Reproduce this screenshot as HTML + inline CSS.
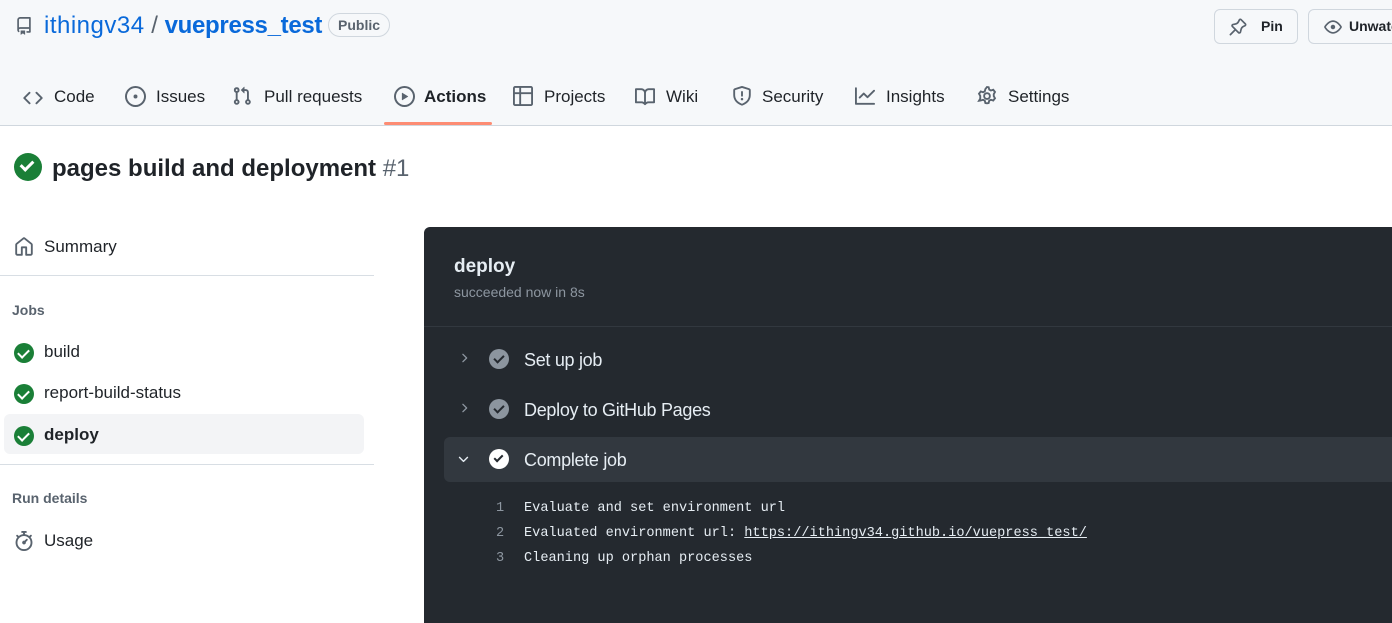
<!DOCTYPE html>
<html><head><meta charset="utf-8"><style>
*{margin:0;padding:0;box-sizing:border-box}
body{width:1392px;height:623px;overflow:hidden;background:#fff;font-family:"Liberation Sans",sans-serif;color:#1f2328;position:relative}
.abs{position:absolute}
.hdr{left:0;top:0;width:1392px;height:126px;background:#f6f8fa;border-bottom:1px solid #d0d7de}
.nav{top:87px;font-size:17px;color:#1f2328;white-space:nowrap}
.nav svg{position:absolute;margin-top:-1px}
.btn{top:9px;height:35px;border:1px solid #d0d7de;border-radius:6px;background:#f6f8fa;font-size:14px;font-weight:bold;}
.side{font-size:17px;color:#1f2328}
.chk{position:absolute;width:20px;height:20px;border-radius:50%;background:#1a7f37}
.chk:after{content:"";position:absolute;left:6px;top:4px;width:5px;height:9px;border:solid #fff;border-width:0 2px 2px 0;transform:rotate(45deg)}
.dark{left:424px;top:227px;width:968px;height:396px;background:#24292f;border-radius:6px 0 0 0}
.g{position:absolute;width:20px;height:20px;border-radius:50%;background:#8c959f}
.g:after{content:"";position:absolute;left:7px;top:4px;width:4px;height:8px;border:solid #24292f;border-width:0 2px 2px 0;transform:rotate(45deg)}
.step{font-size:18px;color:#e6edf3;letter-spacing:-0.3px}
.mono{font-family:"Liberation Mono",monospace;font-size:13.6px;color:#e6edf3}
</style></head><body>
<div class="abs hdr"></div>
<svg class="abs" style="left:15px;top:16px" width="18" height="20" viewBox="0 0 16 16"><path fill="#59636e" d="M2 2.5A2.5 2.5 0 0 1 4.5 0h8.75a.75.75 0 0 1 .75.75v12.5a.75.75 0 0 1-.75.75h-2.5a.75.75 0 0 1 0-1.5h1.75v-2h-8a1 1 0 0 0-.714 1.7.75.75 0 1 1-1.072 1.05A2.495 2.495 0 0 1 2 11.5Zm10.5-1h-8a1 1 0 0 0-1 1v6.708A2.486 2.486 0 0 1 4.5 9h8ZM5 12.25a.25.25 0 0 1 .25-.25h3.5a.25.25 0 0 1 .25.25v3.25a.25.25 0 0 1-.4.2l-1.45-1.087a.249.249 0 0 0-.3 0L5.4 15.7a.25.25 0 0 1-.4-.2Z"/></svg>
<div class="abs" style="left:44px;top:12px;font-size:24px;color:#0969da;white-space:nowrap"><span style="letter-spacing:0.5px">ithingv34</span> <span style="color:#59636e">/</span> <span style="font-weight:600;letter-spacing:-0.3px">vuepress_test</span></div>
<div class="abs" style="left:328px;top:13px;height:24px;padding:0 9px;border:1px solid #d0d7de;border-radius:12px;font-size:14px;line-height:22px;color:#59636e;font-weight:bold">Public</div>
<div class="abs btn" style="left:1214px;width:84px"><svg class="abs" style="left:14px;top:8px" width="18" height="18" viewBox="0 0 16 16"><path fill="#59636e" d="m11.294.984 3.722 3.722a1.75 1.75 0 0 1-.504 2.826l-1.327.613a3.089 3.089 0 0 0-1.707 2.084l-.584 2.454c-.317 1.332-1.972 1.8-2.940.832L5.750 11.311 1.780 15.280a.749.749 0 1 1-1.060-1.060l3.969-3.970-2.204-2.204c-.968-.968-.5-2.623.832-2.940l2.454-.584a3.080 3.080 0 0 0 2.084-1.707l.613-1.327a1.750 1.750 0 0 1 2.826-.504ZM6.283 9.723l2.732 2.731a.25.25 0 0 0 .42-.119l.584-2.454a4.586 4.586 0 0 1 2.537-3.098l1.328-.613a.25.25 0 0 0 .072-.404l-3.722-3.722a.25.25 0 0 0-.404.072l-.613 1.328a4.584 4.584 0 0 1-3.098 2.537l-2.454.584a.25.25 0 0 0-.119.42l2.731 2.732Z"/></svg><span class="abs" style="left:46px;top:8px">Pin</span></div>
<div class="abs btn" style="left:1308px;width:100px"><svg class="abs" style="left:15px;top:8px" width="18" height="18" viewBox="0 0 16 16"><path fill="#59636e" d="M8 2c1.981 0 3.671.992 4.933 2.078 1.27 1.091 2.187 2.345 2.637 3.023a1.62 1.62 0 0 1 0 1.798c-.45.678-1.367 1.932-2.637 3.023C11.67 13.008 9.981 14 8 14c-1.981 0-3.671-.992-4.933-2.078C1.797 10.83.88 9.576.43 8.898a1.62 1.62 0 0 1 0-1.798c.45-.677 1.367-1.931 2.637-3.022C4.33 2.992 6.019 2 8 2ZM1.679 7.932a.12.12 0 0 0 0 .136c.411.622 1.241 1.75 2.366 2.717C5.176 11.758 6.527 12.5 8 12.5c1.473 0 2.825-.742 3.955-1.715 1.124-.967 1.954-2.096 2.366-2.717a.12.12 0 0 0 0-.136c-.412-.621-1.242-1.750-2.366-2.717C10.824 4.242 9.473 3.5 8 3.5c-1.473 0-2.825.742-3.955 1.715-1.124.967-1.954 2.096-2.366 2.717ZM8 10a2 2 0 1 1-.001-3.999A2 2 0 0 1 8 10Z"/></svg><span class="abs" style="left:40px;top:8px">Unwatch</span></div>

<div class="abs nav" style="left:0;width:1392px">
<svg style="left:23px;top:2px" width="20" height="20" viewBox="0 0 16 16"><path fill="#59636e" d="m11.28 3.22 4.25 4.25a.75.75 0 0 1 0 1.06l-4.25 4.25a.749.749 0 0 1-1.06-1.06L13.94 8l-3.72-3.72a.749.749 0 0 1 1.06-1.06Zm-6.56 0a.751.751 0 0 1 1.06 1.06L2.06 8l3.72 3.72a.749.749 0 0 1-1.06 1.06L.47 8.530a.75.75 0 0 1 0-1.06Z"/></svg><span class="abs" style="left:54px">Code</span>
<svg style="left:125px;top:0" width="21" height="21" viewBox="0 0 16 16"><path fill="#59636e" d="M8 9.5a1.5 1.5 0 1 0 0-3 1.5 1.5 0 0 0 0 3Z"/><path fill="#59636e" d="M8 0a8 8 0 1 1 0 16A8 8 0 0 1 8 0ZM1.5 8a6.5 6.5 0 1 0 13 0 6.5 6.5 0 0 0-13 0Z"/></svg><span class="abs" style="left:156px">Issues</span>
<svg style="left:232px;top:0" width="20" height="20" viewBox="0 0 16 16"><path fill="#59636e" d="M1.5 3.25a2.25 2.25 0 1 1 3 2.122v5.256a2.251 2.251 0 1 1-1.5 0V5.372A2.25 2.25 0 0 1 1.5 3.25Zm5.677-.177L9.573.677A.25.25 0 0 1 10 .854V2.5h1A2.5 2.5 0 0 1 13.5 5v5.628a2.251 2.251 0 1 1-1.5 0V5a1 1 0 0 0-1-1h-1v1.646a.25.25 0 0 1-.427.177L7.177 3.427a.25.25 0 0 1 0-.354ZM3.75 2.5a.75.75 0 1 0 0 1.5.75.75 0 0 0 0-1.5Zm0 9.5a.75.75 0 1 0 0 1.5.75.75 0 0 0 0-1.5Zm8.25.75a.75.75 0 1 0 1.5 0 .75.75 0 0 0-1.5 0Z"/></svg><span class="abs" style="left:264px">Pull requests</span>
<svg style="left:394px;top:0" width="21" height="21" viewBox="0 0 16 16"><path fill="#59636e" d="M8 0a8 8 0 1 1 0 16A8 8 0 0 1 8 0ZM1.5 8a6.5 6.5 0 1 0 13 0 6.5 6.5 0 0 0-13 0Zm4.879-2.773 4.264 2.559a.25.25 0 0 1 0 .428l-4.264 2.559A.25.25 0 0 1 6 10.559V5.442a.25.25 0 0 1 .379-.215Z"/></svg><span class="abs" style="left:424px;font-weight:bold">Actions</span>
<svg style="left:513px;top:0" width="20" height="20" viewBox="0 0 16 16"><path fill="#59636e" d="M0 1.75C0 .784.784 0 1.75 0h12.5C15.216 0 16 .784 16 1.75v12.5A1.75 1.75 0 0 1 14.25 16H1.75A1.75 1.75 0 0 1 0 14.25ZM6.5 6.5v8h7.75a.25.25 0 0 0 .25-.25V6.5Zm8-1.5V1.75a.25.25 0 0 0-.25-.25H6.5V5Zm-13 1.5v7.75c0 .138.112.25.25.25H5v-8ZM5 5V1.5H1.75a.25.25 0 0 0-.25.25V5Z"/></svg><span class="abs" style="left:544px">Projects</span>
<svg style="left:635px;top:1px" width="20" height="20" viewBox="0 0 16 16"><path fill="#59636e" d="M0 1.75A.75.75 0 0 1 .75 1h4.253c1.227 0 2.317.59 3 1.501A3.743 3.743 0 0 1 11.006 1h4.245a.75.75 0 0 1 .75.75v10.5a.75.75 0 0 1-.75.75h-4.507a2.25 2.25 0 0 0-1.591.659l-.622.621a.75.75 0 0 1-1.06 0l-.622-.621A2.25 2.25 0 0 0 5.258 13H.75a.75.75 0 0 1-.75-.75Zm7.251 10.324.004-5.073-.002-2.253A2.25 2.25 0 0 0 5.003 2.5H1.5v9h3.757a3.75 3.75 0 0 1 1.994.574ZM8.755 4.75l-.004 7.322a3.752 3.752 0 0 1 1.992-.572H14.5v-9h-3.495a2.25 2.25 0 0 0-2.25 2.25Z"/></svg><span class="abs" style="left:666px">Wiki</span>
<svg style="left:732px;top:0" width="20" height="20" viewBox="0 0 16 16"><path fill="#59636e" d="M7.467.133a1.748 1.748 0 0 1 1.066 0l5.25 1.68A1.75 1.75 0 0 1 15 3.48V7c0 1.566-.32 3.182-1.303 4.682-.983 1.498-2.585 2.813-5.032 3.855a1.697 1.697 0 0 1-1.33 0c-2.447-1.042-4.049-2.357-5.032-3.855C1.32 10.182 1 8.566 1 7V3.48a1.755 1.755 0 0 1 1.217-1.667Zm.61 1.429a.25.25 0 0 0-.153 0l-5.25 1.68a.25.25 0 0 0-.174.238V7c0 1.358.275 2.666 1.057 3.86.784 1.194 2.121 2.34 4.366 3.297a.196.196 0 0 0 .154 0c2.245-.956 3.582-2.104 4.366-3.298C13.225 9.666 13.5 8.36 13.5 7V3.48a.251.251 0 0 0-.174-.237l-5.25-1.68ZM8.75 4.75v3a.75.75 0 0 1-1.5 0v-3a.75.75 0 0 1 1.5 0ZM9 10.5a1 1 0 1 1-2 0 1 1 0 0 1 2 0Z"/></svg><span class="abs" style="left:762px">Security</span>
<svg style="left:855px;top:0" width="20" height="20" viewBox="0 0 16 16"><path fill="#59636e" d="M1.5 1.75V13.5h13.75a.75.75 0 0 1 0 1.5H.75a.75.75 0 0 1-.75-.75V1.75a.75.75 0 0 1 1.5 0Zm14.28 2.53-5.25 5.25a.75.75 0 0 1-1.06 0L7 7.06 4.28 9.78a.751.751 0 0 1-1.042-.018.751.751 0 0 1-.018-1.042l3.25-3.25a.75.75 0 0 1 1.06 0L10 7.94l4.72-4.72a.751.751 0 0 1 1.042.018.751.751 0 0 1 .018 1.042Z"/></svg><span class="abs" style="left:886px">Insights</span>
<svg style="left:977px;top:0" width="20" height="20" viewBox="0 0 16 16"><path fill="none" stroke="#59636e" stroke-width="1.5" d="M8 .8l1.3.2.5 1.9 1.3.7 1.9-.6 1.4 1.8-1 1.7v1.6l1 1.7-1.4 1.8-1.9-.6-1.3.7-.5 1.9-1.3.2-1.3-.2-.5-1.9-1.3-.7-1.9.6L1.6 11.8l1-1.7V7.9l-1-1.7L3 4.4l1.9.6 1.3-.7.5-1.9Z"/><circle cx="8" cy="8" r="2.3" fill="none" stroke="#59636e" stroke-width="1.5"/></svg><span class="abs" style="left:1008px">Settings</span>
</div>
<div class="abs" style="left:384px;top:122px;width:108px;height:3px;background:#fd8c73;border-radius:2px"></div>

<div class="abs" style="left:14px;top:153px;width:28px;height:28px;border-radius:50%;background:#1a7f37"></div>
<div class="abs" style="left:23px;top:158px;width:8px;height:13px;border:solid #fff;border-width:0 3px 3px 0;transform:rotate(45deg)"></div>
<div class="abs" style="left:52px;top:155px;font-size:24px;font-weight:600;white-space:nowrap">pages build and deployment <span style="color:#59636e;font-weight:normal">#1</span></div>

<svg class="abs" style="left:14px;top:237px" width="20" height="20" viewBox="0 0 16 16"><path fill="#59636e" d="M6.906.664a1.749 1.749 0 0 1 2.187 0l5.25 4.2c.415.332.657.835.657 1.367v7.019A1.75 1.75 0 0 1 13.25 15h-3.5a.75.75 0 0 1-.75-.75V9H7v5.25a.75.75 0 0 1-.75.75h-3.5A1.75 1.75 0 0 1 1 13.25V6.23c0-.531.242-1.034.657-1.366l5.25-4.2Zm1.25 1.171a.25.25 0 0 0-.312 0l-5.25 4.2a.25.25 0 0 0-.094.196v7.019c0 .138.112.25.25.25H5.5V8.25a.75.75 0 0 1 .75-.75h3.5a.75.75 0 0 1 .75.75v5.25h2.75a.25.25 0 0 0 .25-.25V6.23a.25.25 0 0 0-.094-.195Z"/></svg>
<div class="abs side" style="left:44px;top:237px">Summary</div>
<div class="abs" style="left:0;top:275px;width:374px;height:1px;background:#d8dee4"></div>
<div class="abs" style="left:12px;top:302px;font-size:14px;color:#59636e;font-weight:bold">Jobs</div>
<div class="chk" style="left:14px;top:343px"></div><div class="abs side" style="left:44px;top:342px">build</div>
<div class="chk" style="left:14px;top:384px"></div><div class="abs side" style="left:44px;top:383px">report-build-status</div>
<div class="abs" style="left:4px;top:414px;width:360px;height:40px;background:#f3f4f6;border-radius:6px"></div>
<div class="chk" style="left:14px;top:426px"></div><div class="abs side" style="left:44px;top:425px;font-weight:bold">deploy</div>
<div class="abs" style="left:0;top:464px;width:374px;height:1px;background:#d8dee4"></div>
<div class="abs" style="left:12px;top:490px;font-size:14px;color:#59636e;font-weight:bold">Run details</div>
<svg class="abs" style="left:14px;top:531px" width="20" height="20" viewBox="0 0 16 16"><path fill="#59636e" d="M5.75.75A.75.75 0 0 1 6.5 0h3a.75.75 0 0 1 0 1.5h-.75v1l-.001.041a6.724 6.724 0 0 1 3.464 1.435l.007-.006.75-.75a.749.749 0 0 1 1.275.326.749.749 0 0 1-.215.734l-.75.75-.006.007a6.75 6.75 0 1 1-10.548 0L2.72 5.03l-.75-.75a.751.751 0 0 1 .018-1.042.751.751 0 0 1 1.042-.018l.75.75.007.006A6.72 6.72 0 0 1 7.25 2.541V1.5H6.5a.75.75 0 0 1-.75-.75ZM8 14.5a5.25 5.25 0 1 0-.001-10.501A5.25 5.25 0 0 0 8 14.5Zm.389-6.7 1.33-1.33a.75.75 0 1 1 1.061 1.06L9.45 8.861A1.503 1.503 0 0 1 8 10.75a1.499 1.499 0 1 1 .389-2.95Z"/></svg>
<div class="abs side" style="left:44px;top:531px">Usage</div>

<div class="abs dark"></div>
<div class="abs" style="left:454px;top:256px;font-size:19px;font-weight:bold;color:#e6edf3">deploy</div>
<div class="abs" style="left:454px;top:284px;font-size:14px;color:#8d96a0">succeeded now in 8s</div>
<div class="abs" style="left:424px;top:326px;width:968px;height:1px;background:#32383f"></div>
<svg class="abs" style="left:457px;top:351px" width="14" height="14" viewBox="0 0 16 16"><path fill="#8d96a0" d="M6.22 3.22a.75.75 0 0 1 1.06 0l4.25 4.25a.75.75 0 0 1 0 1.06l-4.25 4.25a.751.751 0 0 1-1.042-.018.751.751 0 0 1-.018-1.042L9.94 8 6.22 4.28a.75.75 0 0 1 0-1.06Z"/></svg>
<div class="g" style="left:489px;top:349px"></div><div class="abs step" style="left:524px;top:350px">Set up job</div>
<svg class="abs" style="left:457px;top:401px" width="14" height="14" viewBox="0 0 16 16"><path fill="#8d96a0" d="M6.22 3.22a.75.75 0 0 1 1.06 0l4.25 4.25a.75.75 0 0 1 0 1.06l-4.25 4.25a.751.751 0 0 1-1.042-.018.751.751 0 0 1-.018-1.042L9.94 8 6.22 4.28a.75.75 0 0 1 0-1.06Z"/></svg>
<div class="g" style="left:489px;top:399px"></div><div class="abs step" style="left:524px;top:400px">Deploy to GitHub Pages</div>
<div class="abs" style="left:444px;top:437px;width:948px;height:45px;background:#32383f;border-radius:6px 0 0 6px"></div>
<svg class="abs" style="left:456px;top:452px" width="15" height="15" viewBox="0 0 16 16"><path fill="#e6edf3" d="M12.78 5.22a.749.749 0 0 1 0 1.06l-4.25 4.25a.749.749 0 0 1-1.06 0L3.22 6.28a.749.749 0 1 1 1.06-1.06L8 8.939l3.72-3.719a.749.749 0 0 1 1.06 0Z"/></svg>
<div class="abs" style="left:489px;top:449px;width:20px;height:20px;border-radius:50%;background:#fff"></div>
<div class="abs" style="left:496px;top:453px;width:5px;height:9px;border:solid #24292f;border-width:0 2px 2px 0;transform:rotate(45deg)"></div>
<div class="abs step" style="left:524px;top:450px">Complete job</div>
<div class="abs mono" style="left:496px;top:501px;color:#8d96a0">1</div><div class="abs mono" style="left:524px;top:501px">Evaluate and set environment url</div>
<div class="abs mono" style="left:496px;top:526px;color:#8d96a0">2</div><div class="abs mono" style="left:524px;top:526px">Evaluated environment url: <u>https://ithingv34.github.io/vuepress_test/</u></div>
<div class="abs mono" style="left:496px;top:551px;color:#8d96a0">3</div><div class="abs mono" style="left:524px;top:551px">Cleaning up orphan processes</div>
</body></html>
